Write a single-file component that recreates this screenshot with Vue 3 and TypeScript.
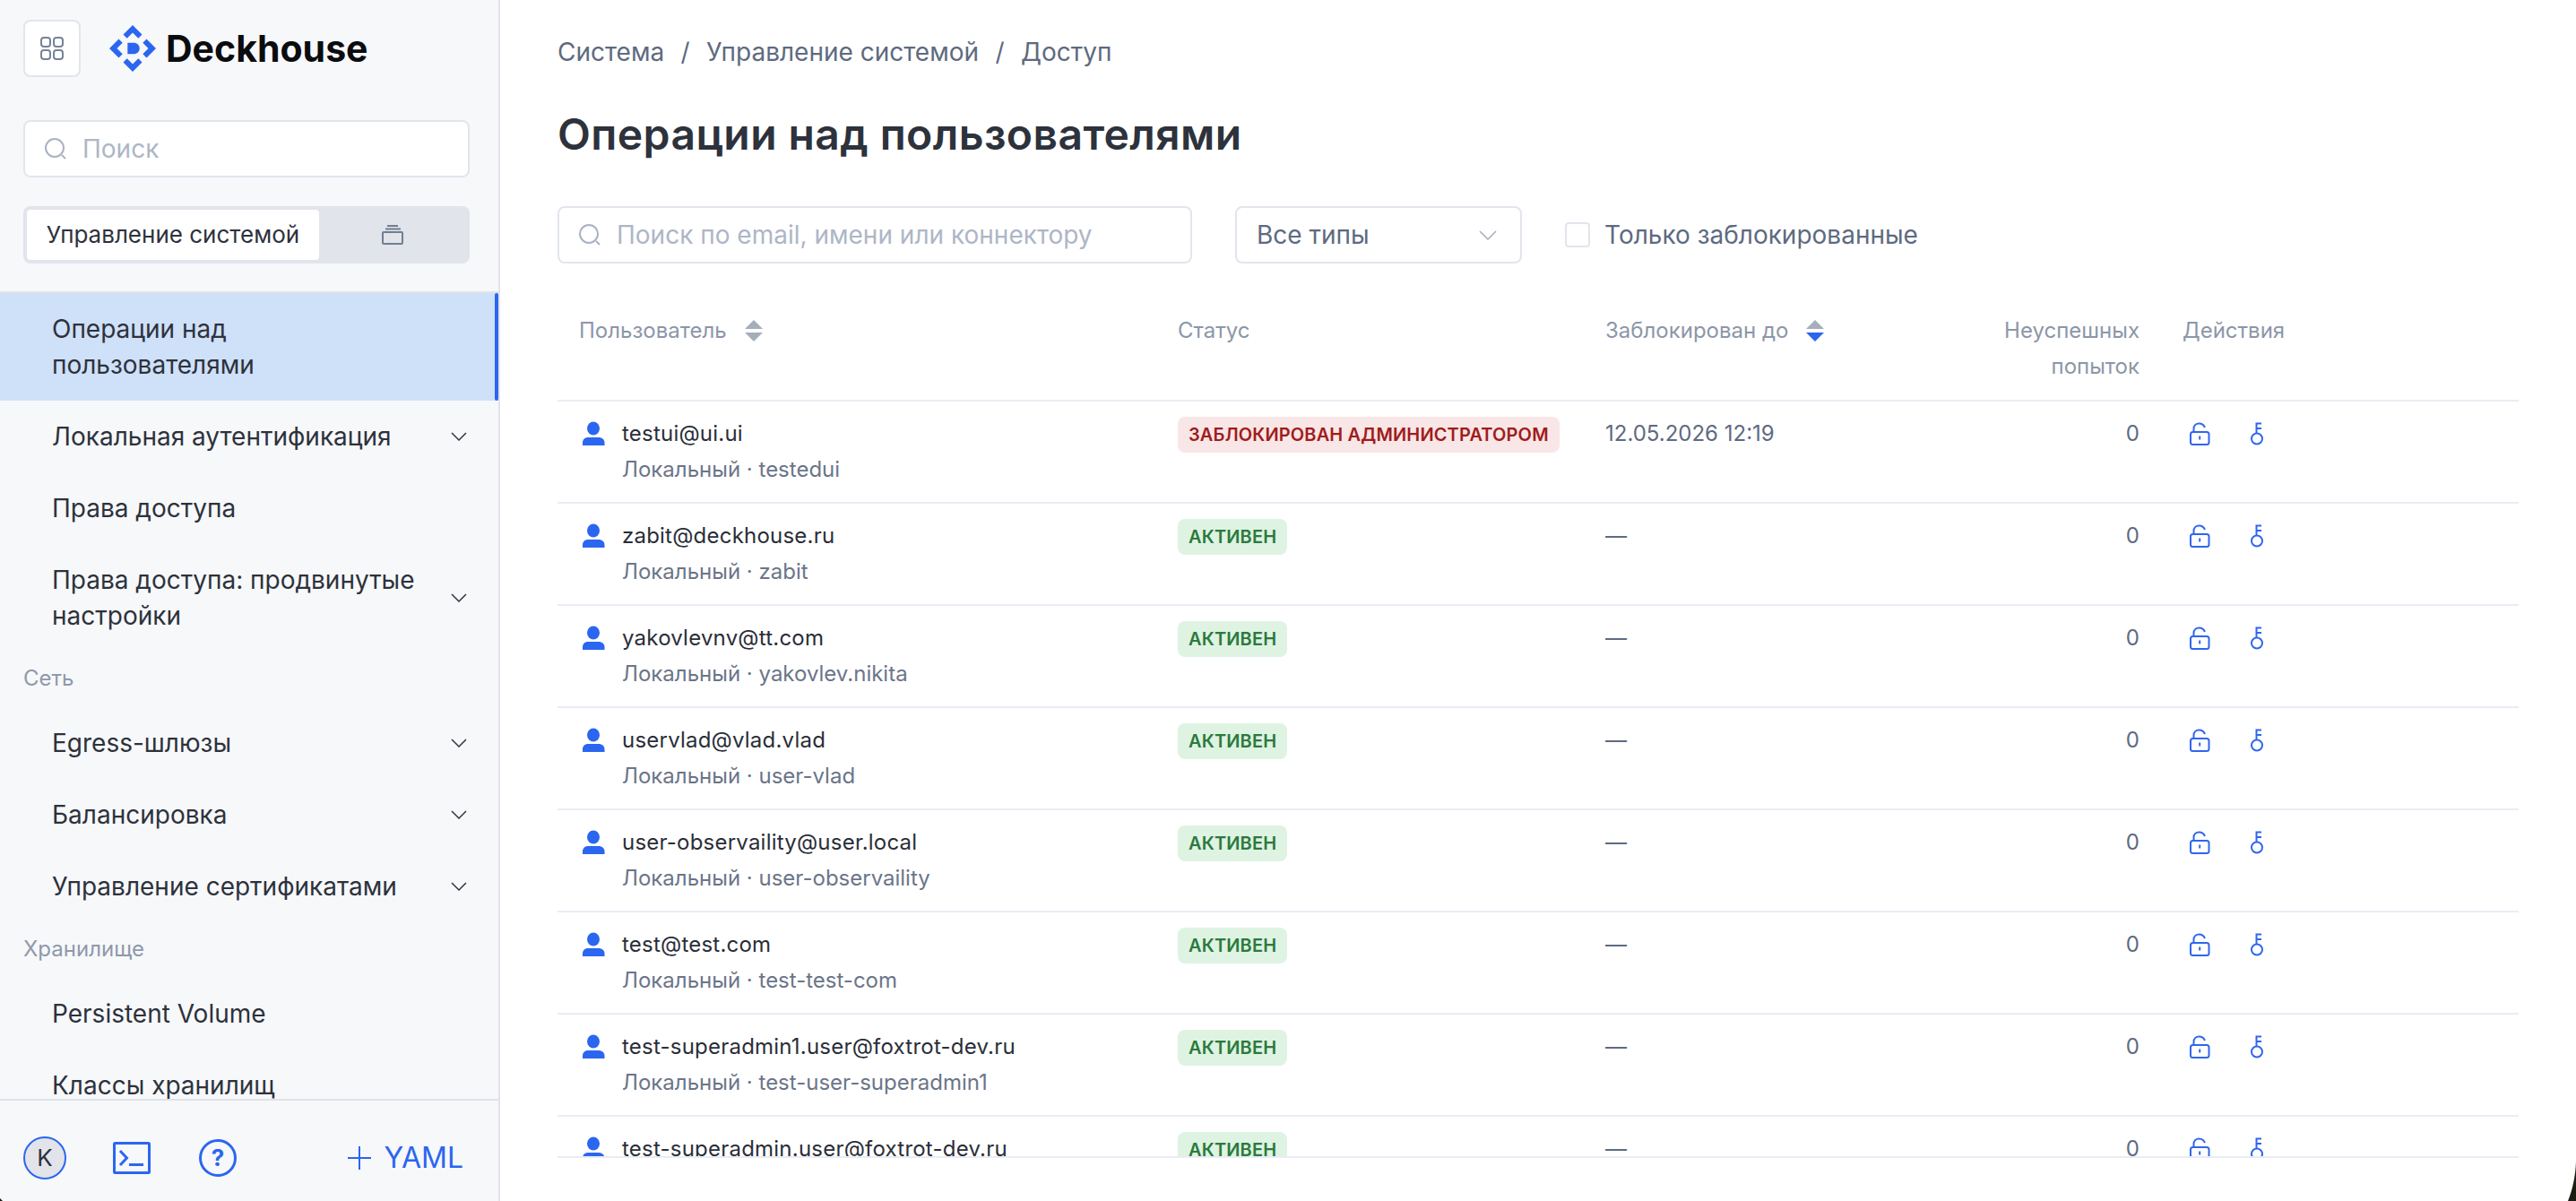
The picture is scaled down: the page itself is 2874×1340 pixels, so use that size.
<script setup lang="ts">
interface NavEntry {
  kind: 'item' | 'section'
  label: string
  chevron?: boolean
  active?: boolean
}
interface UserRow {
  email: string
  login: string
  blocked?: boolean
  until: string
  failed: number
}
const nav: NavEntry[] = [
  { kind: 'item', label: 'Операции над пользователями', active: true },
  { kind: 'item', label: 'Локальная аутентификация', chevron: true },
  { kind: 'item', label: 'Права доступа' },
  { kind: 'item', label: 'Права доступа: продвинутые настройки', chevron: true },
  { kind: 'section', label: 'Сеть' },
  { kind: 'item', label: 'Egress-шлюзы', chevron: true },
  { kind: 'item', label: 'Балансировка', chevron: true },
  { kind: 'item', label: 'Управление сертификатами', chevron: true },
  { kind: 'section', label: 'Хранилище' },
  { kind: 'item', label: 'Persistent Volume' },
  { kind: 'item', label: 'Классы хранилищ' },
]
const users: UserRow[] = [
  { email: 'testui@ui.ui', login: 'testedui', blocked: true, until: '12.05.2026 12:19', failed: 0 },
  { email: 'zabit@deckhouse.ru', login: 'zabit', until: '—', failed: 0 },
  { email: 'yakovlevnv@tt.com', login: 'yakovlev.nikita', until: '—', failed: 0 },
  { email: 'uservlad@vlad.vlad', login: 'user-vlad', until: '—', failed: 0 },
  { email: 'user-observaility@user.local', login: 'user-observaility', until: '—', failed: 0 },
  { email: 'test@test.com', login: 'test-test-com', until: '—', failed: 0 },
  { email: 'test-superadmin1.user@foxtrot-dev.ru', login: 'test-user-superadmin1', until: '—', failed: 0 },
  { email: 'test-superadmin.user@foxtrot-dev.ru', login: 'test-user-superadmin', until: '—', failed: 0 },
]
</script>

<template>
  <div class="app">
    <aside class="side">
      <div class="brand">
        <button class="grid-btn" type="button">
          <svg width="26" height="26" viewBox="0 0 26 26" fill="none" stroke="#77839a" stroke-width="2">
            <rect x="1" y="1" width="10" height="10" rx="3" />
            <rect x="15" y="1" width="10" height="10" rx="3" />
            <rect x="1" y="15" width="10" height="10" rx="3" />
            <rect x="15" y="15" width="10" height="10" rx="3" />
          </svg>
        </button>
        <svg class="logo" width="52" height="52" viewBox="-26 -26 52 52" fill="#2b66f0">
          <g v-for="a in [0, 90, 180, 270]" :key="a" :transform="`rotate(${a})`">
            <path d="M0-26 10.5-15.500 6.300-11.300 0-17.500-6.300-11.300-10.500-15.500Z" />
          </g>
          <path d="M-5.700-6.300H1C5-6.300 7.700-3.700 7.700 0S5 6.300 1 6.300H-5.700Z" />
        </svg>
        <span class="brand-name">Deckhouse</span>
      </div>

      <div class="field side-search">
        <svg class="search-ic" width="24" height="24" viewBox="0 0 24 24" fill="none" stroke="#a9b2c3" stroke-width="2">
          <circle cx="11" cy="11" r="10" />
          <path d="M19 19l4 4" />
        </svg>
        <span class="ph">Поиск</span>
      </div>

      <div class="tabs">
        <div class="tab on">Управление системой</div>
        <div class="tab">
          <svg width="24" height="22" viewBox="0 0 24 22" fill="none" stroke="#717d93" stroke-width="2">
            <rect x="1" y="8" width="22" height="13" rx="1" />
            <path d="M4 4.500H21M6 1H18" />
          </svg>
        </div>
      </div>

      <nav class="nav">
        <template v-for="n in nav" :key="n.label">
          <div v-if="n.kind === 'section'" class="sec">{{ n.label }}</div>
          <div v-else class="item" :class="{ active: n.active }">
            <span class="item-text">{{ n.label }}</span>
            <svg v-if="n.chevron" class="chev" width="18" height="10" viewBox="0 0 18 10" fill="none" stroke="#2f3542" stroke-width="1.500">
              <path d="M1 1l8 8 8-8" />
            </svg>
          </div>
        </template>
      </nav>

      <footer class="foot">
        <div class="avatar">K</div>
        <svg class="term" width="42" height="36" viewBox="0 0 42 36" fill="none" stroke="#2b66f0" stroke-width="3">
          <rect x="1.500" y="1.500" width="39" height="33" rx="1" />
          <path d="M8 10l7.500 8L8 26" />
          <path d="M18 25.500H34" />
        </svg>
        <div class="help">?</div>
        <div class="yaml">
          <svg width="26" height="26" viewBox="0 0 26 26" fill="none" stroke="#2b66f0" stroke-width="2">
            <path d="M13 0V26M0 13H26" />
          </svg>
          <span>YAML</span>
        </div>
      </footer>
    </aside>

    <main class="main">
      <div class="crumbs">
        <span>Система</span><i>/</i><span>Управление системой</span><i>/</i><span>Доступ</span>
      </div>
      <h1 class="title">Операции над пользователями</h1>

      <div class="filters">
        <div class="field main-search">
          <svg class="search-ic" width="24" height="24" viewBox="0 0 24 24" fill="none" stroke="#a9b2c3" stroke-width="2">
            <circle cx="11" cy="11" r="10" />
            <path d="M19 19l4 4" />
          </svg>
          <span class="ph">Поиск по email, имени или коннектору</span>
        </div>
        <div class="field select">
          <span>Все типы</span>
          <svg width="20" height="11" viewBox="0 0 20 11" fill="none" stroke="#a4adbc" stroke-width="1.500">
            <path d="M1 1l9 9 9-9" />
          </svg>
        </div>
        <label class="check"><span class="box"></span>Только заблокированные</label>
      </div>

      <div class="table">
        <div class="head">
          <div class="cell sortable">
            <span>Пользователь</span>
            <svg width="20" height="24" viewBox="0 0 20 24" fill="#a6aebc">
              <path d="M10 0l10 10H0z" /><path d="M0 14h20L10 24z" />
            </svg>
          </div>
          <div class="cell">Статус</div>
          <div class="cell sortable">
            <span>Заблокирован до</span>
            <svg width="20" height="24" viewBox="0 0 20 24" fill="#a6aebc">
              <path d="M10 0l10 10H0z" /><path d="M0 14h20L10 24z" fill="#2b66f0" />
            </svg>
          </div>
          <div class="cell num">Неуспешных попыток</div>
          <div class="cell act-h">Действия</div>
        </div>

        <div v-for="u in users" :key="u.email" class="row">
          <div class="cell user">
            <svg class="person" width="32" height="32" viewBox="0 0 32 32" fill="#2b66f0">
              <ellipse cx="16" cy="10" rx="7" ry="7.500" />
              <path d="M4 26C4 22 7 20 10 20H22C25 20 28.500 22 28.500 26V29H4Z" />
            </svg>
            <div>
              <div class="email">{{ u.email }}</div>
              <div class="login">Локальный · {{ u.login }}</div>
            </div>
          </div>
          <div class="cell">
            <span class="badge" :class="u.blocked ? 'red' : 'green'">
              {{ u.blocked ? 'Заблокирован администратором' : 'Активен' }}
            </span>
          </div>
          <div class="cell muted">{{ u.until }}</div>
          <div class="cell num muted">{{ u.failed }}</div>
          <div class="cell acts">
            <svg width="32" height="32" viewBox="0 0 32 32" fill="none" stroke="#2f66ee" stroke-width="2">
              <rect x="6" y="14" width="20.500" height="14" rx="2.500" />
              <path d="M9.500 14V10.500C9.500 6.700 12.300 4.500 15.500 4.500 18.500 4.500 20.800 6.300 22 9" />
              <path d="M16.200 18.500V22.500" />
            </svg>
            <svg width="32" height="32" viewBox="0 0 32 32" fill="none" stroke="#2f66ee" stroke-width="2">
              <circle cx="16" cy="21.500" r="6" />
              <path d="M15.500 15.500V4.500H21M15.500 10H21" />
            </svg>
          </div>
        </div>
      </div>
    </main>

    <svg class="corner-r" width="9" height="44" viewBox="0 0 9 44"><path d="M9 0C8.500 16 5 32 0 44H9Z" fill="#1c1c12" /></svg>
    <svg class="corner-l" width="3" height="3" viewBox="0 0 3 3"><path d="M0 0C1 1 2 2 3 3H0Z" fill="#1c1c12" /></svg>
  </div>
</template>

<style scoped>
.app {
  position: relative;
  display: flex;
  width: 2874px;
  height: 1340px;
  overflow: hidden;
  background: #fff;
  font-family: Inter, "Noto Sans", sans-serif;
  font-size: 28px;
  line-height: 40px;
  color: #2d323c;
}
.side {
  width: 558px;
  flex: none;
  box-sizing: border-box;
  display: flex;
  flex-direction: column;
  background: #f7f8fa;
  border-right: 2px solid #e2e4ea;
}
.brand {
  display: flex;
  align-items: center;
  padding: 22px 0 0 26px;
}
.grid-btn {
  width: 64px;
  height: 64px;
  padding: 0;
  display: flex;
  align-items: center;
  justify-content: center;
  background: #fff;
  border: 2px solid #e2e5ec;
  border-radius: 8px;
}
.logo {
  margin-left: 32px;
}
.brand-name {
  margin-left: 11px;
  font-size: 41px;
  line-height: 44px;
  font-weight: 700;
  color: #0b0c0f;
}
.field {
  box-sizing: border-box;
  height: 64px;
  display: flex;
  align-items: center;
  background: #fff;
  border: 2px solid #e2e5ec;
  border-radius: 8px;
}
.side-search {
  margin: 48px 32px 0 26px;
  padding-left: 22px;
}
.search-ic {
  flex: none;
  margin-right: 18px;
}
.ph {
  color: #aeb6c6;
}
.tabs {
  margin: 32px 32px 31px 26px;
  height: 64px;
  box-sizing: border-box;
  padding: 4px;
  display: grid;
  grid-template-columns: 326px 1fr;
  background: #e1e4ea;
  border-radius: 8px;
}
.tab {
  display: flex;
  align-items: center;
  justify-content: center;
}
.tab.on {
  background: #fff;
  border-radius: 4px;
  font-size: 26px;
}
.nav {
  flex: 1;
  min-height: 0;
  overflow: hidden;
  border-top: 2px solid #e2e4ea;
}
.item {
  position: relative;
  display: flex;
  align-items: center;
  justify-content: space-between;
  padding: 20px 35px 20px 58px;
}
.item-text {
  max-width: 410px;
}
.item.active {
  background: #cfe0f9;
}
.item.active .item-text {
  max-width: 340px;
}
.item.active::after {
  content: "";
  position: absolute;
  top: 0;
  right: 0;
  bottom: 0;
  width: 4px;
  border-radius: 2px;
  background: #2b66f0;
}
.sec {
  height: 62px;
  box-sizing: border-box;
  padding: 10px 0 0 26px;
  font-size: 24px;
  color: #8f99ab;
}
.foot {
  flex: none;
  height: 114px;
  box-sizing: border-box;
  padding-top: 40px;
  padding-left: 26px;
  display: flex;
  align-items: flex-start;
  border-top: 2px solid #dfe2e9;
}
.avatar {
  box-sizing: border-box;
  width: 48px;
  height: 48px;
  display: flex;
  align-items: center;
  justify-content: center;
  background: #e2e4ea;
  border: 2px solid #2b66f0;
  border-radius: 50%;
  font-size: 26px;
}
.term {
  margin: 6px 0 0 52px;
}
.help {
  box-sizing: border-box;
  width: 42px;
  height: 42px;
  margin: 3px 0 0 54px;
  display: flex;
  align-items: center;
  justify-content: center;
  border: 3px solid #2b66f0;
  border-radius: 50%;
  color: #2b66f0;
  font-size: 26px;
  font-weight: 700;
}
.yaml {
  margin: 0 39px 0 auto;
  display: flex;
  align-items: center;
  gap: 15px;
  height: 48px;
  font-size: 32px;
  color: #2b66f0;
}
.main {
  flex: 1;
  min-width: 0;
  padding: 38px 64px 0;
}
.crumbs {
  display: flex;
  gap: 18.4px;
  color: #5e6a80;
}
.crumbs i {
  font-style: normal;
}
.title {
  margin: 40px 0 48px;
  font-size: 48px;
  line-height: 64px;
  font-weight: 600;
  letter-spacing: 0.42px;
  color: #2d323c;
}
.filters {
  display: flex;
  align-items: center;
  gap: 48px;
  color: #5e6a80;
}
.main-search {
  width: 708px;
  padding-left: 22px;
}
.select {
  width: 320px;
  padding: 0 26px 0 22px;
  justify-content: space-between;
}
.check {
  display: flex;
  align-items: center;
  gap: 16px;
}
.box {
  box-sizing: border-box;
  width: 28px;
  height: 28px;
  background: #fff;
  border: 2px solid #e2e5ec;
  border-radius: 4px;
}
.table {
  margin-top: 32px;
  height: 966px;
  box-sizing: border-box;
  overflow: hidden;
  border-bottom: 2px solid #e9edf3;
}
.head,
.row {
  display: grid;
  grid-template-columns: 668px 477px 403px 241px 399px;
  border-bottom: 2px solid #e9edf3;
}
.head {
  box-sizing: border-box;
  height: 122px;
  padding-top: 23px;
  font-size: 24px;
  color: #8c96a8;
}
.row {
  box-sizing: border-box;
  height: 114px;
  padding-top: 16px;
  font-size: 24px;
}
.cell {
  padding: 0 24px;
}
.sortable {
  display: flex;
  align-items: flex-start;
  gap: 20px;
}
.sortable svg {
  margin-top: 8px;
}
.num {
  text-align: right;
}
.user {
  display: flex;
  gap: 16px;
}
.person {
  flex: none;
  margin-top: 4px;
}
.email {
  letter-spacing: 0.22px;
  color: #2a2e38;
}
.login {
  color: #6b7589;
}
.muted {
  color: #5e6a80;
}
.badge {
  display: inline-block;
  height: 40px;
  margin-top: 1px;
  padding: 0 12px;
  border-radius: 8px;
  font-size: 20px;
  letter-spacing: 0.14px;
  font-weight: 600;
  text-transform: uppercase;
  white-space: nowrap;
  vertical-align: top;
}
.badge.red {
  background: #f9e6e6;
  color: #a01c1c;
}
.badge.green {
  background: #dff3e3;
  color: #2b7a3d;
}
.acts {
  display: flex;
  gap: 32px;
  padding-left: 27px;
  padding-top: 4px;
}
.corner-r {
  position: absolute;
  right: 0;
  bottom: 0;
}
.corner-l {
  position: absolute;
  left: 0;
  bottom: 0;
}
</style>
